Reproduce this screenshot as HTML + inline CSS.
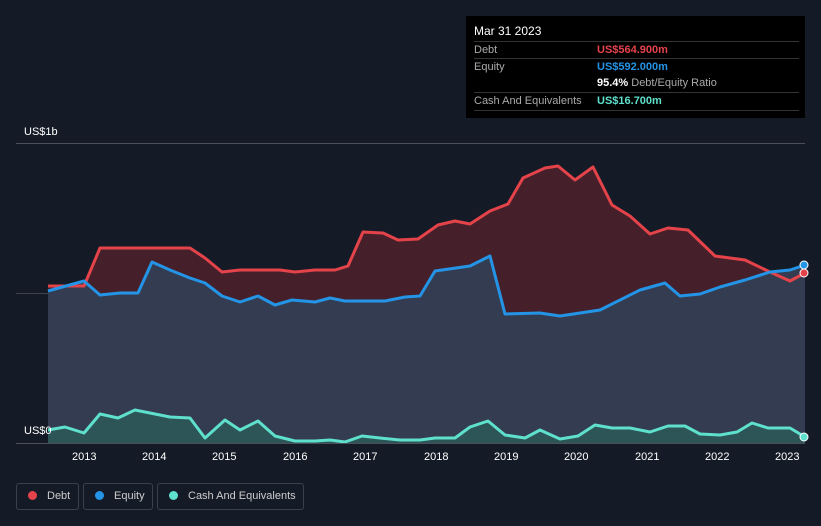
<!DOCTYPE html><html><head><style>
body{margin:0;width:821px;height:526px;background:#151b26;font-family:"Liberation Sans",sans-serif;overflow:hidden;position:relative}
.tip{position:absolute;left:466px;top:16px;width:339px;height:102px;background:#000;color:#fff;font-size:11px}
.r{position:absolute;left:8px;right:6px;height:17px;border-top:1px solid #333;line-height:17px;color:#aaa}
.v{position:absolute;left:123px;font-weight:bold}
.ax{position:absolute;color:#fff;font-size:11px}
.lg{position:absolute;top:483px;height:27px;border:1px solid #3a404c;border-radius:3px;color:#ccc;font-size:11px;line-height:25px;box-sizing:border-box;white-space:nowrap}
.d{display:inline-block;width:9px;height:9px;border-radius:50%;margin:0 10px 0 11px;vertical-align:-1px}
</style></head><body>
<svg width="821" height="526" style="position:absolute;left:0;top:0">
<line x1="16" y1="143.5" x2="805" y2="143.5" stroke="#4a4f5a"/>
<line x1="16" y1="293.5" x2="805" y2="293.5" stroke="#3e434e"/>
<polygon fill="#45202a" points="48,286 84,286 100,248 190,248 205,258 222,272 240,270 280,270 295,272 315,270 335,270 348,266 363,232 383,233 398,240 418,239 438,225 455,221 470,224 490,211 508,204 523,178 545,168 558,166 575,180 593,167 612,205 630,216 650,234 668,228 688,230 715,256 745,260 770,272 790,281 805,273 805,443 48,443"/>
<polygon fill="#343c52" points="48,291 84,281 100,295 120,293 138,293 152,262 170,270 190,278 205,283 222,296 240,302 258,296 275,305 292,300 315,302 330,298 345,301 385,301 405,297 420,296 435,271 470,266 490,256 505,314 540,313 560,316 600,310 640,290 665,283 680,296 700,294 720,287 745,280 770,272 790,270 805,265 805,443 48,443"/>
<polygon fill="#2d5558" points="48,430 65,427 84,433 100,414 118,418 135,410 155,414 170,417 190,418 205,438 225,420 240,430 258,421 275,436 295,441 315,441 330,440 345,442 362,436 380,438 400,440 420,440 435,438 455,438 470,427 488,421 505,435 525,438 540,430 560,439 578,436 595,425 612,428 630,428 650,432 668,426 685,426 700,434 720,435 737,432 752,423 768,428 790,428 805,437 805,443 48,443"/>
<g fill="none" stroke-width="3" stroke-linejoin="round">
<polyline stroke="#e5434a" points="48,286 84,286 100,248 190,248 205,258 222,272 240,270 280,270 295,272 315,270 335,270 348,266 363,232 383,233 398,240 418,239 438,225 455,221 470,224 490,211 508,204 523,178 545,168 558,166 575,180 593,167 612,205 630,216 650,234 668,228 688,230 715,256 745,260 770,272 790,281 805,273"/>
<polyline stroke="#2394e6" points="48,291 84,281 100,295 120,293 138,293 152,262 170,270 190,278 205,283 222,296 240,302 258,296 275,305 292,300 315,302 330,298 345,301 385,301 405,297 420,296 435,271 470,266 490,256 505,314 540,313 560,316 600,310 640,290 665,283 680,296 700,294 720,287 745,280 770,272 790,270 805,265"/>
<polyline stroke="#5ee0cc" points="48,430 65,427 84,433 100,414 118,418 135,410 155,414 170,417 190,418 205,438 225,420 240,430 258,421 275,436 295,441 315,441 330,440 345,442 362,436 380,438 400,440 420,440 435,438 455,438 470,427 488,421 505,435 525,438 540,430 560,439 578,436 595,425 612,428 630,428 650,432 668,426 685,426 700,434 720,435 737,432 752,423 768,428 790,428 805,437"/>
</g>
<line x1="16" y1="443.5" x2="805" y2="443.5" stroke="#4a4f5a"/>
<circle cx="804" cy="273" r="4" fill="#e5434a" stroke="#fff"/>
<circle cx="804" cy="265" r="4" fill="#2394e6" stroke="#fff"/>
<circle cx="804" cy="437" r="4" fill="#5ee0cc" stroke="#fff"/>
</svg>
<div class="ax" style="left:24px;top:126px">US$1b</div>
<div class="ax" style="left:24px;top:425px">US$0</div>
<div class="ax" style="left:72px;top:451px">2013</div><div class="ax" style="left:142px;top:451px">2014</div><div class="ax" style="left:212px;top:451px">2015</div><div class="ax" style="left:283px;top:451px">2016</div><div class="ax" style="left:353px;top:451px">2017</div><div class="ax" style="left:424px;top:451px">2018</div><div class="ax" style="left:494px;top:451px">2019</div><div class="ax" style="left:564px;top:451px">2020</div><div class="ax" style="left:635px;top:451px">2021</div><div class="ax" style="left:705px;top:451px">2022</div><div class="ax" style="left:775px;top:451px">2023</div>
<div class="tip">
<div style="position:absolute;left:8px;top:8px;font-size:12px">Mar 31 2023</div>
<div class="r" style="top:25px">Debt<span class="v" style="color:#e5434a">US$564.900m</span></div>
<div class="r" style="top:42px">Equity<span class="v" style="color:#2394e6">US$592.000m</span></div>
<div class="r" style="top:59px;border:0"><span class="v" style="color:#fff">95.4% <span style="color:#aaa;font-weight:normal">Debt/Equity Ratio</span></span></div>
<div class="r" style="top:76px">Cash And Equivalents<span class="v" style="color:#5ee0cc">US$16.700m</span></div>
<div class="r" style="top:94px;height:0"></div>
</div>
<div class="lg" style="left:16px;width:63px"><span class="d" style="background:#e5434a"></span>Debt</div>
<div class="lg" style="left:83px;width:70px"><span class="d" style="background:#2394e6"></span>Equity</div>
<div class="lg" style="left:157px;width:147px"><span class="d" style="background:#5ee0cc"></span>Cash And Equivalents</div>
</body></html>
